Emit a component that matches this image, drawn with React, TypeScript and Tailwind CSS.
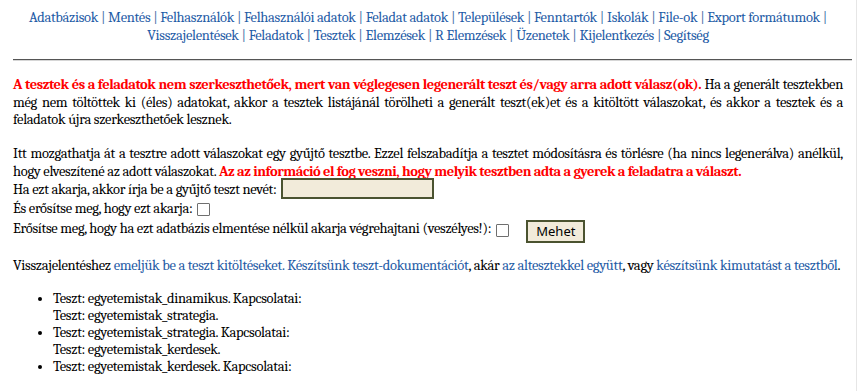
import React from "react";

const navItems = [
  "Adatbázisok",
  "Mentés",
  "Felhasználók",
  "Felhasználói adatok",
  "Feladat adatok",
  "Települések",
  "Fenntartók",
  "Iskolák",
  "File-ok",
  "Export formátumok",
  "Visszajelentések",
  "Feladatok",
  "Tesztek",
  "Elemzések",
  "R Elemzések",
  "Üzenetek",
  "Kijelentkezés",
  "Segítség",
];

export default function App() {
  const navNodes: React.ReactNode[] = [];
  navItems.forEach((n, i) => {
    navNodes.push(
      <a key={"a" + i} className="text-[#1f5ca6] font-serif">
        {n}
      </a>
    );
    if (i < navItems.length - 1) {
      navNodes.push(
        <span key={"s" + i} className="text-[#4a72a8] font-serif">
          {" | "}
        </span>
      );
    }
  });

  return (
    <div className="w-[859px] min-h-[391px] bg-white font-serif">
      <div className="w-[857px] min-h-[391px] border-r border-[#e6e6e6] px-[13px] pt-[9px] text-black text-[14.5px] tracking-[-0.3px] font-serif">
        <div className="text-center leading-[18px] px-[8px] font-serif">{navNodes}</div>

        <div className="mt-[14px] -mr-[9px] border-t border-[#555555] border-b border-b-[#d6d6d6] h-[2px]" />

        <div className="mt-[15px] text-justify leading-[17.5px] font-serif">
          <b className="text-[#ff0000] font-serif tracking-[-0.45px]">
            A tesztek és a feladatok nem szerkeszthetőek, mert van véglegesen legenerált teszt és/vagy arra adott válasz(ok).
          </b>{" "}
          Ha a generált tesztekben még nem töltöttek ki (éles) adatokat, akkor a tesztek listájánál törölheti a generált teszt(ek)et és a kitöltött válaszokat, és akkor a tesztek és a feladatok újra szerkeszthetőek lesznek.
        </div>

        <div className="mt-[16px] text-justify leading-[18px] font-serif">
          Itt mozgathatja át a tesztre adott válaszokat egy gyűjtő tesztbe. Ezzel felszabadítja a tesztet módosításra és törlésre (ha nincs legenerálva) anélkül, hogy elveszítené az adott válaszokat.{" "}
          <b className="text-[#ff0000] font-serif tracking-[-0.45px]">
            Az az információ el fog veszni, hogy melyik tesztben adta a gyerek a feladatra a választ.
          </b>
        </div>

        <div className="flex items-start h-[18px] font-serif">
          <span className="leading-[18px]">Ha ezt akarja, akkor írja be a gyűjtő teszt nevét:</span>
          <input
            type="text"
            className="ml-[4px] -mt-[3px] w-[153px] h-[21px] bg-[#f2ebda] border-2 border-[#4b5330] outline-none"
          />
        </div>

        <div className="flex items-start h-[20px] font-serif">
          <span className="leading-[20px]">És erősítse meg, hogy ezt akarja:</span>
          <input
            type="checkbox"
            className="appearance-none ml-[5px] mt-[4px] w-[13px] h-[13px] border border-[#6f6f6f] bg-white rounded-[1px]"
          />
        </div>

        <div className="flex items-start h-[24px] font-serif">
          <span className="leading-[20px]">Erősítse meg, hogy ha ezt adatbázis elmentése nélkül akarja végrehajtani (veszélyes!):</span>
          <input
            type="checkbox"
            className="appearance-none ml-[5px] mt-[5px] w-[13px] h-[13px] border border-[#6f6f6f] bg-white rounded-[1px]"
          />
          <button className="ml-[17px] mt-[1px] h-[23px] px-[8px] bg-[#f2ebda] border-2 border-[#4b5330] text-[13px] tracking-normal leading-[18px] text-black font-sans">
            Mehet
          </button>
        </div>

        <div className="mt-[14px] leading-[18px] font-serif">
          Visszajelentéshez <a className="text-[#1f5ca6]">emeljük be a teszt kitöltéseket.</a>{" "}
          <a className="text-[#1f5ca6]">Készítsünk teszt-dokumentációt</a>, akár{" "}
          <a className="text-[#1f5ca6]">az altesztekkel együtt</a>, vagy{" "}
          <a className="text-[#1f5ca6]">készítsünk kimutatást a tesztből</a>.
        </div>

        <ul className="mt-[15px] pl-[40px] list-disc leading-[17px] font-serif">
          <li>
            Teszt: egyetemistak_dinamikus. Kapcsolatai:
            <br />
            Teszt: egyetemistak_strategia.
          </li>
          <li>
            Teszt: egyetemistak_strategia. Kapcsolatai:
            <br />
            Teszt: egyetemistak_kerdesek.
          </li>
          <li>Teszt: egyetemistak_kerdesek. Kapcsolatai:</li>
        </ul>
      </div>
    </div>
  );
}
